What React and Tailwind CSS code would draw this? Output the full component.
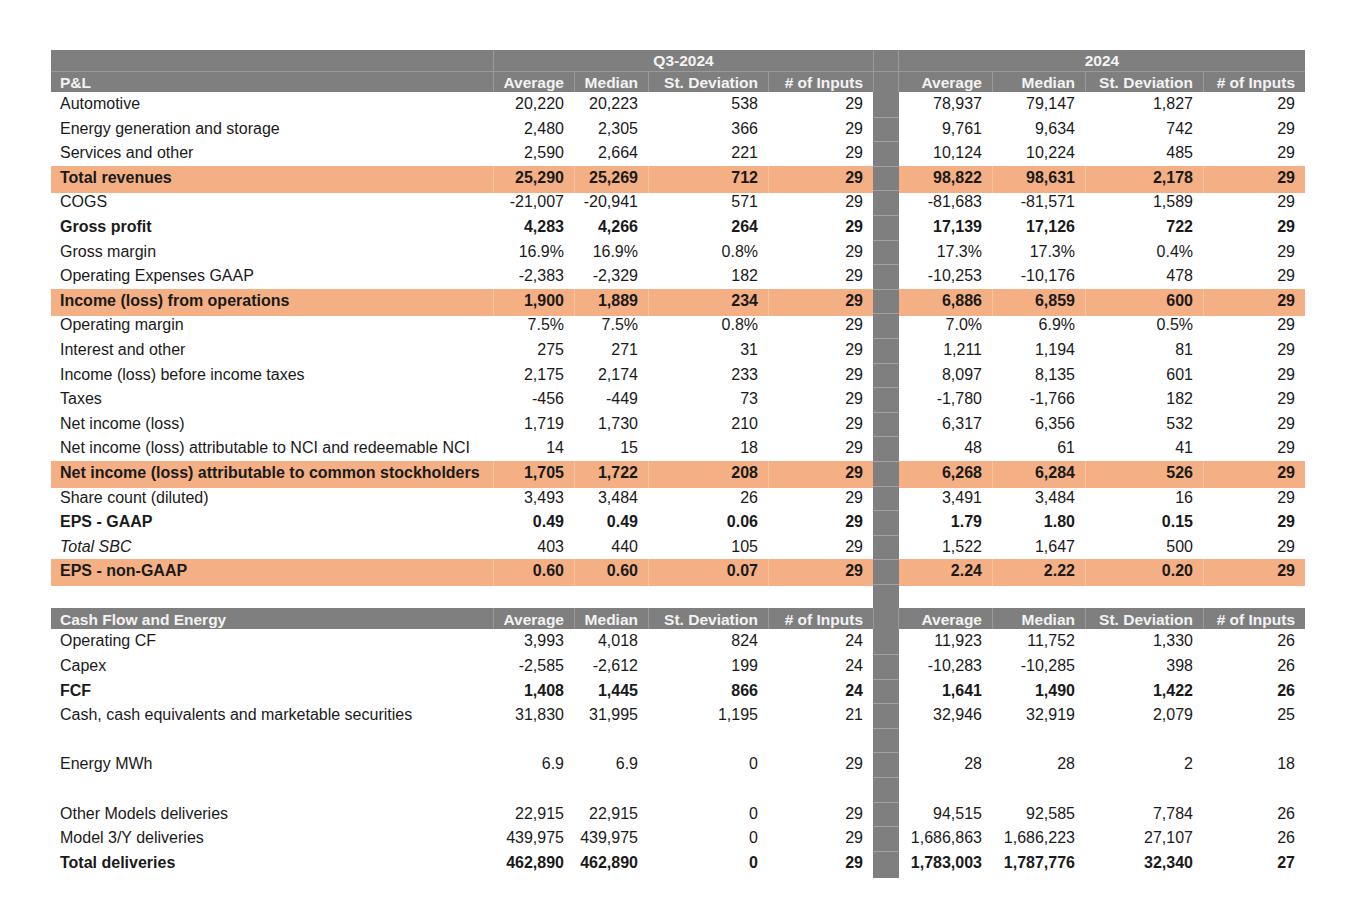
import React from "react";

const COLS =
  "grid grid-cols-[442px_81px_74px_120px_105px_26px_93px_93px_118px_102px]";

const pl = [
  { l: "Automotive", q: ["20,220", "20,223", "538", "29"], y: ["78,937", "79,147", "1,827", "29"] },
  { l: "Energy generation and storage", q: ["2,480", "2,305", "366", "29"], y: ["9,761", "9,634", "742", "29"] },
  { l: "Services and other", q: ["2,590", "2,664", "221", "29"], y: ["10,124", "10,224", "485", "29"] },
  { l: "Total revenues", b: true, o: true, q: ["25,290", "25,269", "712", "29"], y: ["98,822", "98,631", "2,178", "29"] },
  { l: "COGS", q: ["-21,007", "-20,941", "571", "29"], y: ["-81,683", "-81,571", "1,589", "29"] },
  { l: "Gross profit", b: true, q: ["4,283", "4,266", "264", "29"], y: ["17,139", "17,126", "722", "29"] },
  { l: "Gross margin", q: ["16.9%", "16.9%", "0.8%", "29"], y: ["17.3%", "17.3%", "0.4%", "29"] },
  { l: "Operating Expenses GAAP", q: ["-2,383", "-2,329", "182", "29"], y: ["-10,253", "-10,176", "478", "29"] },
  { l: "Income (loss) from operations", b: true, o: true, q: ["1,900", "1,889", "234", "29"], y: ["6,886", "6,859", "600", "29"] },
  { l: "Operating margin", q: ["7.5%", "7.5%", "0.8%", "29"], y: ["7.0%", "6.9%", "0.5%", "29"] },
  { l: "Interest and other", q: ["275", "271", "31", "29"], y: ["1,211", "1,194", "81", "29"] },
  { l: "Income (loss) before income taxes", q: ["2,175", "2,174", "233", "29"], y: ["8,097", "8,135", "601", "29"] },
  { l: "Taxes", q: ["-456", "-449", "73", "29"], y: ["-1,780", "-1,766", "182", "29"] },
  { l: "Net income (loss)", q: ["1,719", "1,730", "210", "29"], y: ["6,317", "6,356", "532", "29"] },
  { l: "Net income (loss) attributable to NCI and redeemable NCI", q: ["14", "15", "18", "29"], y: ["48", "61", "41", "29"] },
  { l: "Net income (loss) attributable to common stockholders", b: true, o: true, q: ["1,705", "1,722", "208", "29"], y: ["6,268", "6,284", "526", "29"] },
  { l: "Share count (diluted)", q: ["3,493", "3,484", "26", "29"], y: ["3,491", "3,484", "16", "29"] },
  { l: "EPS - GAAP", b: true, q: ["0.49", "0.49", "0.06", "29"], y: ["1.79", "1.80", "0.15", "29"] },
  { l: "Total SBC", i: true, q: ["403", "440", "105", "29"], y: ["1,522", "1,647", "500", "29"] },
  { l: "EPS - non-GAAP", b: true, o: true, q: ["0.60", "0.60", "0.07", "29"], y: ["2.24", "2.22", "0.20", "29"] },
];

const cf = [
  { l: "Operating CF", q: ["3,993", "4,018", "824", "24"], y: ["11,923", "11,752", "1,330", "26"] },
  { l: "Capex", q: ["-2,585", "-2,612", "199", "24"], y: ["-10,283", "-10,285", "398", "26"] },
  { l: "FCF", b: true, q: ["1,408", "1,445", "866", "24"], y: ["1,641", "1,490", "1,422", "26"] },
  { l: "Cash, cash equivalents and marketable securities", q: ["31,830", "31,995", "1,195", "21"], y: ["32,946", "32,919", "2,079", "25"] },
  { blank: true },
  { l: "Energy MWh", q: ["6.9", "6.9", "0", "29"], y: ["28", "28", "2", "18"] },
  { blank: true },
  { l: "Other Models deliveries", q: ["22,915", "22,915", "0", "29"], y: ["94,515", "92,585", "7,784", "26"] },
  { l: "Model 3/Y deliveries", q: ["439,975", "439,975", "0", "29"], y: ["1,686,863", "1,686,223", "27,107", "26"] },
  { l: "Total deliveries", b: true, q: ["462,890", "462,890", "0", "29"], y: ["1,783,003", "1,787,776", "32,340", "27"] },
];

function Sep({ first }) {
  return (
    <div
      className={
        "bg-[#7f7f7f] " + (first ? "" : "border-t border-[#a2a2a2]")
      }
    />
  );
}

function Row({ r, first }) {
  if (r.blank) {
    return (
      <div className={COLS + " h-[24.6px]"}>
        <div className="col-span-5" />
        <Sep first={first} />
        <div className="col-span-4" />
      </div>
    );
  }
  const bg = r.o ? "bg-[#f4b084]" : "";
  const weight = r.b ? "font-bold" : "";
  const ital = r.i ? "italic" : "";
  const num = (v, k, idx) => (
    <div
      key={k}
      className={
        "flex items-center justify-end pr-[10px] pb-[3px] " +
        bg +
        (r.o && idx > 0 ? " border-l border-[#f7c4a2]" : "")
      }
    >
      {v}
    </div>
  );
  return (
    <div className={COLS + " h-[24.6px] text-[16px] text-[#1a1a1a] " + weight}>
      <div className={"flex items-center pl-[9px] pb-[3px] whitespace-nowrap " + bg + " " + ital}>
        {r.l}
      </div>
      {r.q.map((v, i) => num(v, "q" + i, i + 1))}
      <Sep first={first} />
      {r.y.map((v, i) => num(v, "y" + i, i))}
    </div>
  );
}

function ColHeads({ label, topLine }) {
  const heads = ["Average", "Median", "St. Deviation", "# of Inputs"];
  return (
    <div
      className={
        COLS +
        " h-[21px] bg-[#7f7f7f] text-[15.5px] font-bold text-[#f3f3f3] " +
        (topLine ? "border-t border-[#9a9a9a]" : "")
      }
    >
      <div className="flex items-center pl-[9px] leading-none pt-[2px]">{label}</div>
      {heads.map((h) => (
        <div
          key={"a" + h}
          className="flex items-center justify-end pr-[10px] border-l border-[#9a9a9a] leading-none pt-[2px]"
        >
          {h}
        </div>
      ))}
      <div className="border-l border-r border-[#9a9a9a]" />
      {heads.map((h, i) => (
        <div
          key={"b" + h}
          className={
            "flex items-center justify-end pr-[10px] leading-none pt-[2px] " +
            (i > 0 ? "border-l border-[#9a9a9a]" : "")
          }
        >
          {h}
        </div>
      ))}
    </div>
  );
}

export default function App() {
  return (
    <div
      className="min-h-[900px] w-[1350px] bg-white pt-[50px] pl-[51px]"
      style={{ fontFamily: '"Liberation Sans", Arial, Helvetica, sans-serif' }}
    >
      <div className="w-[1254px]">
        <div className={COLS + " h-[21px] bg-[#7f7f7f] text-[15.5px] font-bold text-[#f3f3f3]"}>
          <div />
          <div className="col-span-4 flex items-center justify-center border-l border-[#9a9a9a] leading-none pt-[1px]">
            Q3-2024
          </div>
          <div className="border-l border-r border-[#9a9a9a]" />
          <div className="col-span-4 flex items-center justify-center leading-none pt-[1px]">
            2024
          </div>
        </div>
        <ColHeads label="P&L" topLine />
        {pl.map((r, i) => (
          <Row key={i} r={r} first={i === 0} />
        ))}
        <Row r={{ blank: true }} />
        <ColHeads label="Cash Flow and Energy" />
        {cf.map((r, i) => (
          <Row key={"c" + i} r={r} first={i === 0} />
        ))}
      </div>
    </div>
  );
}
